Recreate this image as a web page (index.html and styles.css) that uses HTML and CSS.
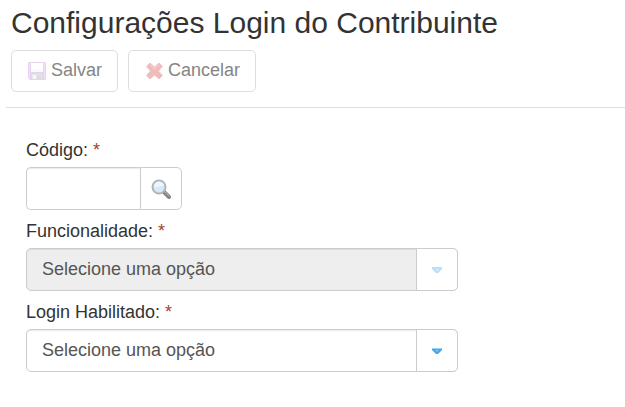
FILE: index.html
```html
<!DOCTYPE html>
<html lang="pt-BR">
<head>
  <meta charset="UTF-8" />
  <meta name="viewport" content="width=device-width, initial-scale=1" />
  <title>Configurações Login do Contribuinte</title>
  <link rel="stylesheet" href="styles.css">
</head>
<body>

<header class="page-header">
  <h1>Configurações Login do Contribuinte</h1>
  <div class="toolbar">
    <button class="btn" type="submit" form="config" disabled>
      <svg class="icon" viewBox="0 0 18 18" aria-hidden="true">
        <path d="M1 0h16l1 1v16l-1 1H2l-2-2V1z" fill="#c9a0dc"/>
        <path d="M1 1h1v15H1zM16 1h1v16h-1z" fill="#dcc3ea"/>
        <path d="M3 1h12v9H3z" fill="#fff"/>
        <path d="M3 7h12v3H3z" fill="#f3f3f9"/>
        <path d="M4 12h10v5H4z" fill="#c9c9cf"/>
        <path d="M5 13h3v4H5z" fill="#eeeef2"/>
        <path d="M9 13h4v4H9z" fill="#b4b4bc"/>
      </svg>
      <span>Salvar</span>
    </button>
    <button class="btn" type="button" disabled>
      <svg class="icon" viewBox="0 0 18 18" aria-hidden="true">
        <path d="M5 1l4.500 4L14 1l3.500 3.500-4 4.500 4 4.500L14 17l-4.500-4L5 17l-3.500-3.500 4-4.500-4-4.500z" fill="#de6a6a" stroke="#d98080" stroke-width="1" stroke-linejoin="round"/>
        <path d="M5 3l4.500 4L14 3" fill="none" stroke="#f0a0a0" stroke-width="1"/>
      </svg>
      <span>Cancelar</span>
    </button>
  </div>
</header>

<form id="config" class="form">
  <label for="codigo">Código: <span class="required">*</span></label>
  <div class="lookup">
    <input type="text" id="codigo" required>
    <button class="lookup-btn" type="button" aria-label="Pesquisar">
      <svg class="icon-search" viewBox="0 0 20 20" aria-hidden="true">
        <path d="M13 13l5 5" stroke="#858585" stroke-width="4" stroke-linecap="round"/>
        <path d="M13 12l5 5" stroke="#b9b9b9" stroke-width="1" stroke-linecap="round"/>
        <circle cx="8" cy="8" r="6.500" fill="#d6e8fa" stroke="#b0b3b8" stroke-width="2"/>
        <path d="M3 8a5 5 0 0 1 10-1c-3-1-6 2-10 1z" fill="#edf5fd"/>
      </svg>
    </button>
  </div>

  <label for="funcionalidade">Funcionalidade: <span class="required">*</span></label>
  <div class="combo">
    <select id="funcionalidade" disabled>
      <option>Selecione uma opção</option>
    </select>
    <span class="combo-arrow">
      <svg viewBox="0 0 10 6" aria-hidden="true">
        <path d="M0 0h10v2L6 6H4L0 2z" fill="#55acee"/>
        <path d="M3 2h4L5 4z" fill="#a9dbfb"/>
      </svg>
    </span>
  </div>

  <label for="habilitado">Login Habilitado: <span class="required">*</span></label>
  <div class="combo">
    <select id="habilitado" required>
      <option>Selecione uma opção</option>
    </select>
    <span class="combo-arrow">
      <svg viewBox="0 0 10 6" aria-hidden="true">
        <path d="M0 0h10v2L6 6H4L0 2z" fill="#4ba3e8"/>
        <path d="M0 0h10v1H0z" fill="#9bd3f9"/>
        <path d="M3 2h4L5 4z" fill="#7cc6f8"/>
      </svg>
    </span>
  </div>
</form>

</body>
</html>
```

FILE: styles.css
```css
* {
  box-sizing: border-box;
}
body {
  margin: 0;
  background: #fff;
  color: #333;
  font-family: "Liberation Sans", Arial, sans-serif;
  font-size: 18px;
  line-height: 24px;
}
.page-header {
  margin-left: 6px;
  padding: 5px 5px 15px;
  border-bottom: 1px solid #ddd;
}
h1 {
  margin: 0 0 9px;
  font-size: 30px;
  font-weight: normal;
  line-height: 36px;
}
.toolbar {
  display: flex;
  gap: 10px;
}
button,
input,
select {
  font: inherit;
  color: #555;
}
.btn {
  display: flex;
  align-items: center;
  gap: 5px;
  height: 42px;
  padding: 0 15px 2px 16px;
  background: #fff;
  border: 1px solid #ccc;
  border-radius: 5px;
  color: #333;
}
.btn:disabled {
  border-color: #ddd;
  color: #858585;
}
.icon {
  width: 18px;
  height: 18px;
  margin-top: 2px;
}
.btn:disabled .icon {
  opacity: 0.45;
}
.form {
  display: flex;
  flex-direction: column;
  align-items: flex-start;
  padding: 21px 26px;
}
label {
  padding: 9px 0 5px;
}
.required {
  color: #a0452e;
}
.lookup {
  display: flex;
  height: 43px;
}
.lookup input {
  width: 114px;
  padding: 0 15px;
  border: 1px solid #ccc;
  border-right: 0;
  border-radius: 5px 0 0 5px;
  box-shadow: inset 0 1px 1px rgba(0, 0, 0, 0.08);
}
.lookup-btn {
  display: flex;
  align-items: center;
  justify-content: center;
  width: 42px;
  padding: 0;
  background: #fff;
  border: 1px solid #ccc;
  border-radius: 0 5px 5px 0;
}
.icon-search {
  width: 20px;
  height: 20px;
}
.combo {
  display: grid;
  width: 432px;
  max-width: 100%;
  height: 43px;
}
.combo select {
  grid-area: 1 / 1;
  appearance: none;
  padding: 0 57px 2px 15px;
  background: #fff;
  border: 1px solid #ccc;
  border-radius: 5px;
  box-shadow: inset 0 1px 1px rgba(0, 0, 0, 0.08);
}
.combo select:disabled {
  background: #eee;
  opacity: 1;
}
/* sits on top of the right end of the select */
.combo-arrow {
  grid-area: 1 / 1;
  justify-self: end;
  display: flex;
  align-items: center;
  justify-content: center;
  width: 42px;
  background: #fff;
  border: 1px solid #ccc;
  border-radius: 0 5px 5px 0;
  pointer-events: none;
}
.combo-arrow svg {
  width: 10px;
  height: 6px;
}
.combo select:disabled + .combo-arrow svg {
  opacity: 0.4;
}
```
